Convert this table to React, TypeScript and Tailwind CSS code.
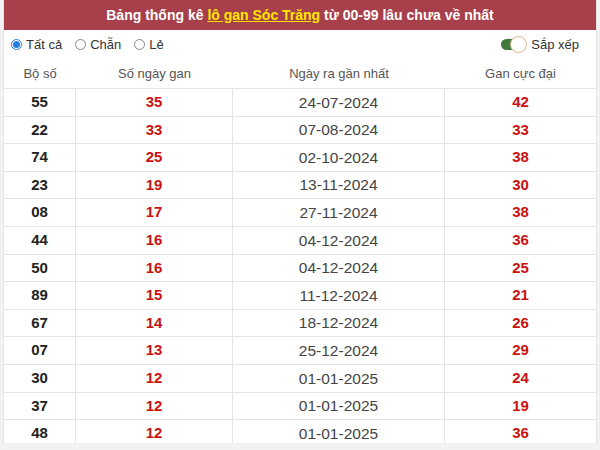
import { useState } from 'react'

interface Row {
  num: string
  days: number
  date: string
  max: number
}

const rows: Row[] = [
  { num: '55', days: 35, date: '24-07-2024', max: 42 },
  { num: '22', days: 33, date: '07-08-2024', max: 33 },
  { num: '74', days: 25, date: '02-10-2024', max: 38 },
  { num: '23', days: 19, date: '13-11-2024', max: 30 },
  { num: '08', days: 17, date: '27-11-2024', max: 38 },
  { num: '44', days: 16, date: '04-12-2024', max: 36 },
  { num: '50', days: 16, date: '04-12-2024', max: 25 },
  { num: '89', days: 15, date: '11-12-2024', max: 21 },
  { num: '67', days: 14, date: '18-12-2024', max: 26 },
  { num: '07', days: 13, date: '25-12-2024', max: 29 },
  { num: '30', days: 12, date: '01-01-2025', max: 24 },
  { num: '37', days: 12, date: '01-01-2025', max: 19 },
  { num: '48', days: 12, date: '01-01-2025', max: 36 },
]

const filters = ['Tất cả', 'Chẵn', 'Lẻ']

export default function App() {
  const [filter, setFilter] = useState('Tất cả')
  const [sorted, setSorted] = useState(true)

  return (
    <div className="h-[450px] overflow-hidden bg-[#f2f2f2] font-['Liberation_Sans',Arial,sans-serif]">
      <div className="mx-[3px] h-[443px] overflow-hidden bg-white border-x border-[#e6e6e6]">
        {/* Title */}
        <div className="h-[30px] bg-[#a8404b] flex items-center justify-center text-white font-bold text-[14px]">
          Bảng thống kê&nbsp;
          <a className="text-[#ffe600] underline">lô gan Sóc Trăng</a>
          &nbsp;từ 00-99 lâu chưa về nhất
        </div>

        {/* Filters */}
        <div className="h-[29px] flex items-center justify-between pl-[7px] pr-[17px] text-[13px] text-[#333]">
          <div className="flex items-center gap-[13px]">
            {filters.map((f) => (
              <label key={f} className="flex items-center gap-[4px] cursor-pointer" onClick={() => setFilter(f)}>
                <span
                  className={`w-[11px] h-[11px] rounded-full border flex items-center justify-center ${
                    filter === f ? 'border-[#2b7de0] bg-white' : 'border-[#888] bg-white'
                  }`}
                >
                  {filter === f && <span className="w-[7px] h-[7px] rounded-full bg-[#2b7de0]" />}
                </span>
                {f}
              </label>
            ))}
          </div>
          <div className="flex items-center gap-[4px] cursor-pointer" onClick={() => setSorted(!sorted)}>
            <span className={`w-[22px] h-[11px] rounded-full relative ${sorted ? 'bg-[#3f7a3c]' : 'bg-[#bbb]'}`}>
              <span
                className={`absolute top-[-3px] w-[17px] h-[17px] rounded-full bg-white border border-[#d8b48a] ${
                  sorted ? 'left-[9px]' : 'left-[-3px]'
                }`}
              />
            </span>
            <span className="ml-[4px]">Sắp xếp</span>
          </div>
        </div>

        {/* Table */}
        <div className="grid grid-cols-[72px_157px_212px_1fr] h-[30px] items-center text-[13px] text-[#555] border-b border-[#e4e4e4]">
          <div className="text-center">Bộ số</div>
          <div className="text-center">Số ngày gan</div>
          <div className="text-center">Ngày ra gần nhất</div>
          <div className="text-center">Gan cực đại</div>
        </div>
        {rows.map((r) => (
          <div
            key={r.num}
            className="grid grid-cols-[72px_157px_212px_1fr] h-[27.6px] text-[15px] border-b border-[#e4e4e4]"
          >
            <div className="flex items-center justify-center font-bold text-[#222] border-r border-[#e4e4e4]">{r.num}</div>
            <div className="flex items-center justify-center font-bold text-[#cc1111] border-r border-[#e4e4e4]">{r.days}</div>
            <div className="flex items-center justify-center text-[15.5px] text-[#444] border-r border-[#e4e4e4]">{r.date}</div>
            <div className="flex items-center justify-center font-bold text-[#cc1111]">{r.max}</div>
          </div>
        ))}
      </div>
    </div>
  )
}
